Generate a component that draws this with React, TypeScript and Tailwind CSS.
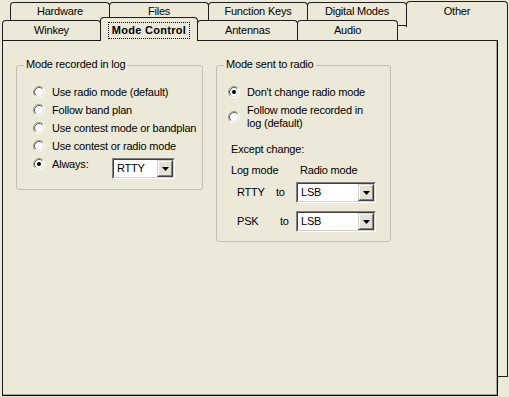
import React from "react";

const LINE = "border-[#1e1e1e]";

function Radio({ checked = false }: { checked?: boolean }) {
  return (
    <svg width="12" height="12" viewBox="0 0 12 12" className="shrink-0">
      <circle cx="6" cy="6" r="5" fill="#ffffff" />
      <path d="M2.11 9.89 A5.5 5.5 0 0 1 9.89 2.11" fill="none" stroke="#9a988c" strokeWidth="1" />
      <path d="M9.89 2.11 A5.5 5.5 0 0 1 2.11 9.89" fill="none" stroke="#ffffff" strokeWidth="1" />
      <path d="M2.82 9.18 A4.5 4.5 0 0 1 9.18 2.82" fill="none" stroke="#606060" strokeWidth="1" />
      <path d="M9.18 2.82 A4.5 4.5 0 0 1 2.82 9.18" fill="none" stroke="#e0ddd0" strokeWidth="1" />
      {checked && <circle cx="6" cy="6" r="2" fill="#000000" />}
    </svg>
  );
}

function Combo({ value, className }: { value: string; className: string }) {
  return (
    <div
      className={`h-[21px] border border-t-[#808080] border-l-[#808080] border-r-white border-b-white ${className}`}
    >
      <div className="flex h-full border border-t-[#404040] border-l-[#404040] border-r-[#d4d0c8] border-b-[#d4d0c8] bg-white">
        <div className="flex-1 flex items-center pl-[3px] leading-[13px]">{value}</div>
        <div className="w-[16px] h-full border border-t-[#d4d0c8] border-l-[#d4d0c8] border-r-[#404040] border-b-[#404040]">
          <div className="w-full h-full flex items-center justify-center bg-[#e4e1d5] border border-t-white border-l-white border-r-[#808080] border-b-[#808080]">
            <svg width="7" height="4" viewBox="0 0 7 4">
              <path d="M0 0 H7 L3.5 4 Z" fill="#000" />
            </svg>
          </div>
        </div>
      </div>
    </div>
  );
}

function Tab({
  label,
  w,
  first = false,
}: {
  label: string;
  w: string;
  first?: boolean;
}) {
  return (
    <div
      className={`${w} ${first ? "" : "-ml-px"} mt-px h-[18px] border-l border-t border-r ${LINE} rounded-t-[4px] flex items-center justify-center leading-[13px]`}
    >
      {label}
    </div>
  );
}

function Tab2({ label, w, first = false }: { label: string; w: string; first?: boolean }) {
  return (
    <div
      className={`${w} ${first ? "" : "-ml-px"} h-[20px] border-l border-t border-r ${LINE} rounded-t-[4px] flex items-center justify-center leading-[13px]`}
    >
      {label}
    </div>
  );
}

function Group({
  title,
  className,
  children,
}: {
  title: string;
  className: string;
  children: React.ReactNode;
}) {
  return (
    <div className={`relative shrink-0 border border-[#c2c0b2] rounded-[3px] ${className}`}>
      <span className="absolute -top-[8px] left-[7px] px-[2px] bg-[#ECE9D8] leading-[13px]">
        {title}
      </span>
      {children}
    </div>
  );
}

export default function App() {
  return (
    <div className="relative w-[509px] h-[397px] overflow-hidden bg-[#ECE9D8] font-['Liberation_Sans',Arial,sans-serif] text-[11px] leading-[13px] tracking-[-0.2px] text-black">
      {/* back sheet of the "Other" row */}
      <div className={`absolute left-[397px] top-[25px] w-[111px] h-[352px] border-t border-r border-b ${LINE}`} />

      <div className="relative pt-px">
        {/* row 1 */}
        <div className="flex items-start pl-[10px] h-[19px]">
          <Tab label="Hardware" w="w-[100px]" first />
          <Tab label="Files" w="w-[100px]" />
          <Tab label="Function Keys" w="w-[100px]" />
          <Tab label="Digital Modes" w="w-[100px]" />
          <div
            className={`relative z-20 -ml-px w-[102px] h-[26px] border-l border-t border-r ${LINE} rounded-t-[4px] bg-[#ECE9D8] flex justify-center pt-[3px]`}
          >
            Other
          </div>
        </div>

        {/* row 2 */}
        <div className="flex items-start pl-[2px] h-[20px]">
          <Tab2 label="Winkey" w="w-[99px]" first />
          <div
            className={`relative z-20 -ml-px -mt-[3px] w-[98px] h-[24px] border-l border-t border-r ${LINE} rounded-t-[4px] bg-[#ECE9D8] flex justify-center pt-[4px]`}
          >
            <span className="h-[17px] px-[3px] border border-dotted border-black font-bold leading-[15px] tracking-[0.3px]">
              Mode Control
            </span>
          </div>
          <Tab2 label="Antennas" w="w-[101px]" />
          <Tab2 label="Audio" w="w-[101px]" />
        </div>

        {/* panel */}
        <div
          className={`relative z-10 ml-[2px] w-[496px] h-[356px] border-l border-t ${LINE} border-r border-b border-r-black border-b-black shadow-[inset_-1px_-1px_0_#aca899] bg-[#ECE9D8] flex items-start gap-[13px] pl-[13px] pt-[24px]`}
        >
          <Group title="Mode recorded in log" className="w-[187px] h-[125px]">
            <div className="pl-[16px] pt-[17px]">
              {[
                "Use radio mode (default)",
                "Follow band plan",
                "Use contest mode or bandplan",
                "Use contest or radio mode",
              ].map((t) => (
                <div key={t} className="flex items-center h-[18px] gap-[7px]">
                  <Radio />
                  <span>{t}</span>
                </div>
              ))}
              <div className="flex items-start">
                <div className="flex items-center h-[18px] gap-[7px] w-[79px]">
                  <Radio checked />
                  <span>Always:</span>
                </div>
                <Combo value="RTTY" className="mt-[3px] w-[63px]" />
              </div>
            </div>
          </Group>

          <Group title="Mode sent to radio" className="w-[175px] h-[177px]">
            <div className="pl-[11px] pt-[17px]">
              <div className="flex items-center h-[18px] gap-[7px]">
                <Radio checked />
                <span>Don't change radio mode</span>
              </div>
              <div className="mt-[3px] flex items-center gap-[7px]">
                <Radio />
                <div className="leading-[13px]">
                  <div>Follow mode recorded in</div>
                  <div>log (default)</div>
                </div>
              </div>
              <div className="mt-[13px] pl-[3px]">Except change:</div>
              <div className="mt-[8px] pl-[3px] flex">
                <span className="w-[69px]">Log mode</span>
                <span>Radio mode</span>
              </div>
              <div className="mt-[5px] pl-[9px] flex items-center">
                <span className="w-[39px]">RTTY</span>
                <span className="w-[20px]">to</span>
                <Combo value="LSB" className="w-[80px]" />
              </div>
              <div className="mt-[8px] pl-[9px] flex items-center">
                <span className="w-[43px]">PSK</span>
                <span className="w-[16px]">to</span>
                <Combo value="LSB" className="w-[80px]" />
              </div>
            </div>
          </Group>
        </div>
      </div>
    </div>
  );
}
